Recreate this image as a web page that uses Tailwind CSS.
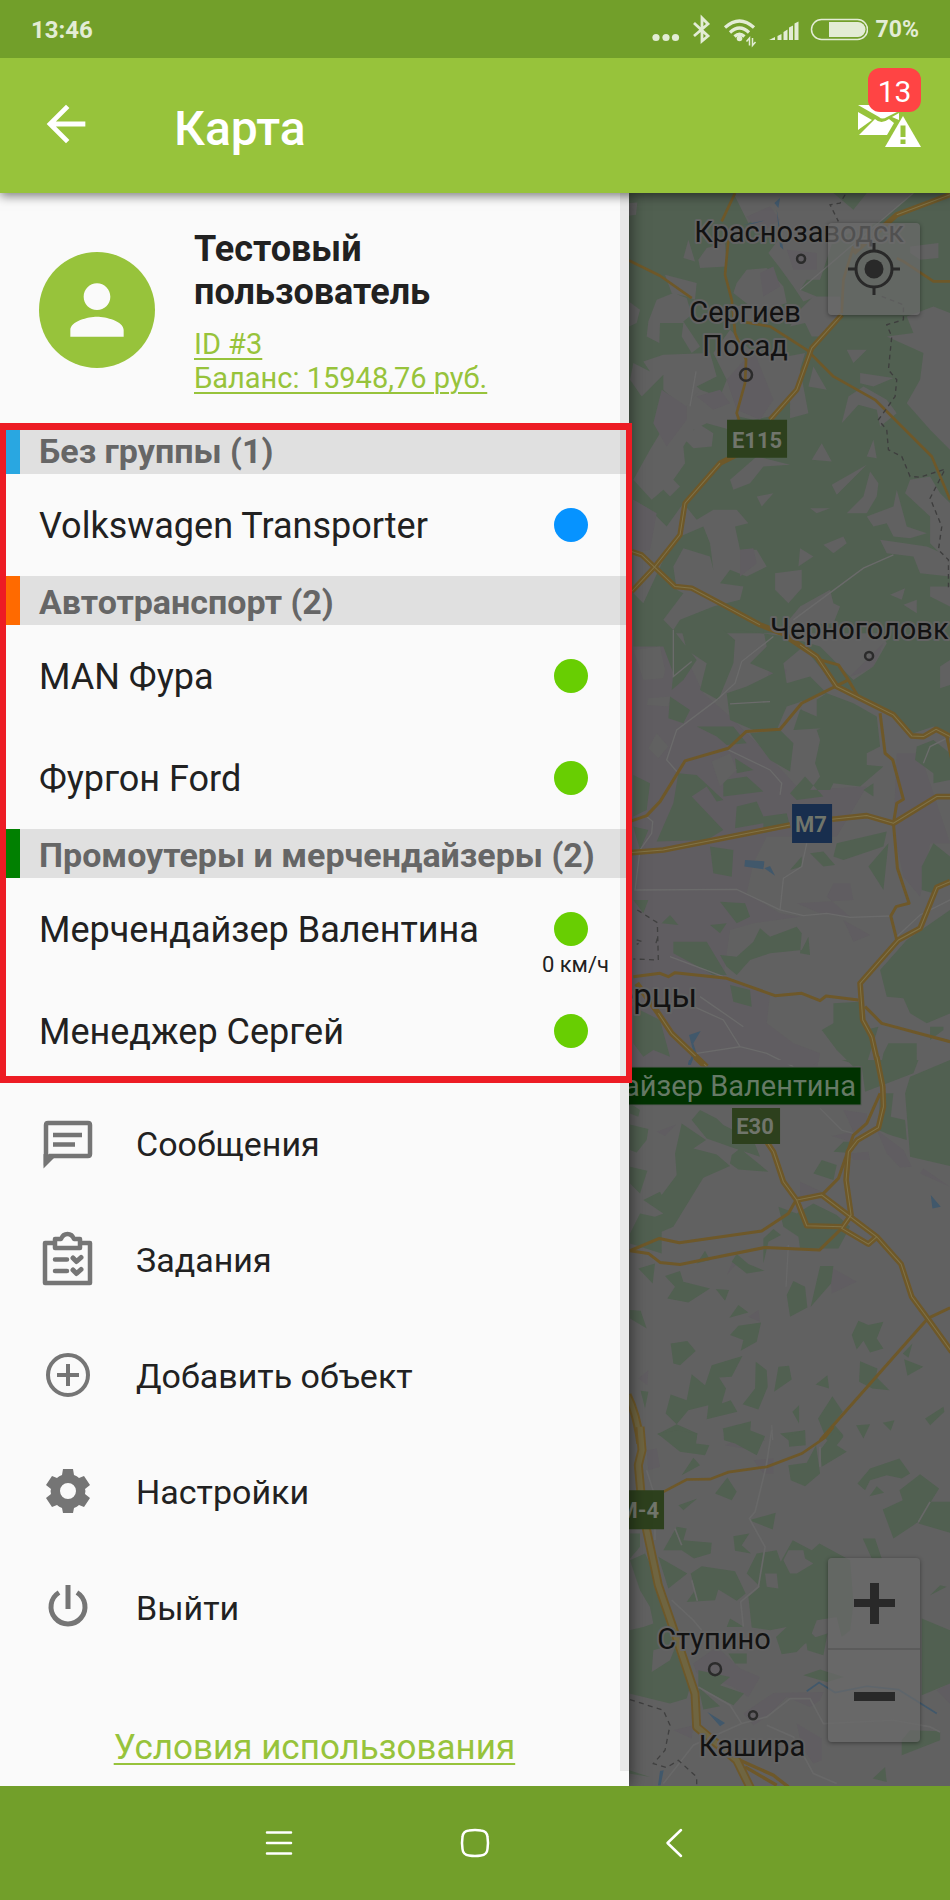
<!DOCTYPE html>
<html lang="ru">
<head>
<meta charset="utf-8">
<meta name="viewport" content="width=device-width, initial-scale=1">
<title>Карта</title>
<script src="https://cdn.jsdelivr.net/npm/@tailwindcss/browser@4"></script>
</head>
<body class="flex min-h-screen flex-col bg-[#fafafa] font-['Roboto','Noto_Sans',sans-serif] text-[#212121]">

<!-- Status bar -->
<div class="relative z-30 flex h-[58px] items-center justify-between bg-[#729f2a] pt-px pr-[31px] pl-[31px] text-[#e3ecd5]">
  <span class="text-[24px] leading-none font-bold">13:46</span>
  <div class="flex items-center">
    <svg class="h-[58px] w-[218px]" viewBox="650 0 218 58" fill="currentColor" aria-hidden="true">
      <circle cx="656" cy="36.500" r="3.600"/><circle cx="666" cy="36.500" r="3.600"/><circle cx="675.500" cy="36.500" r="3.600"/>
      <path d="M694 22l14 13-6 5V17l6 6-14 12" fill="none" stroke="currentColor" stroke-width="2.800"/>
      <g fill="none" stroke="currentColor" stroke-width="3.200"><path d="M725 26.500q14.500-13 29 0M730 31.500q9.500-9 19 0M734.500 35.500q5-4.500 10 0"/></g>
      <circle cx="739.500" cy="37.500" r="2.800"/>
      <path d="M749.500 44.500v-7.500l-3 3.500M752.500 37v7.500l3-3.500" fill="none" stroke="currentColor" stroke-width="1.500"/>
      <path d="M769 39l6-3v3zM777.500 35l4-2v6h-4zM783.500 31l4-2.500V39h-4zM789 26.500l4-2V39h-4zM794.500 22.500l4-2V39h-4z"/>
      <rect x="811.500" y="18.500" width="56" height="20" rx="10" fill="none" stroke="currentColor" stroke-width="1.500"/>
      <path d="M829 21h29a7.500 7.500 0 0 1 0 15h-29z"/>
    </svg>
    <span class="ml-2 text-[23px] leading-none font-bold">70%</span>
  </div>
</div>

<!-- App bar -->
<header class="relative z-20 flex h-[135px] items-center bg-[#97c33b] pr-[29px] pl-[37px] text-white shadow-[0_3px_10px_rgba(0,0,0,0.5)]">
  <button type="button" aria-label="Назад" class="mb-[3px] size-[58px]">
    <svg class="size-[58px]" viewBox="0 0 24 24" fill="currentColor"><path d="M20 11H7.830l5.590-5.590L12 4l-8 8 8 8 1.410-1.410L7.830 13H20v-2z"/></svg>
  </button>
  <h1 class="ml-[79px] pt-[6px] text-[48px] leading-[56px] font-medium">Карта</h1>
  <button type="button" aria-label="Уведомления: 13" class="relative mb-[35px] ml-auto h-[80px] w-[63px]">
    <svg class="h-[80px] w-[63px]" viewBox="858 68 63 80" fill="#fff">
      <path d="M858 105h42l-1 6-12 6q-5 3-8 0zM858 112l14 8-14 10zM875 119q6 6 14 0l5 4-7 12h-28zM899 113v7l-7-3z"/>
      <path d="M903 116l18 31h-36z"/>
      <path d="M900.500 125.500h5V137h-5zM900.500 139.500h5v4.500h-5z" fill="#97c33b"/>
    </svg>
    <span class="absolute top-0 right-0 flex h-11 w-[53px] items-center justify-center rounded-xl bg-[#ff4444] pt-[3px] text-[30px] leading-none">13</span>
  </button>
</header>

<div class="flex flex-1">
  <!-- Drawer -->
  <aside class="relative z-10 flex w-[66.2%] flex-col bg-[#fafafa] shadow-[0_0_16px_rgba(0,0,0,0.6)]">
    <div class="flex items-start gap-[39px] px-[39px] pt-[35px] pb-[30px]">
      <div class="mt-6 flex size-[116px] shrink-0 items-center justify-center rounded-full bg-[#97c33b]">
        <svg class="size-[80px]" viewBox="0 0 24 24" fill="#fafafa" aria-hidden="true"><path d="M12 12c2.210 0 4-1.790 4-4s-1.790-4-4-4-4 1.790-4 4 1.790 4 4 4zm0 2c-2.670 0-8 1.340-8 4v2h16v-2c0-2.660-5.330-4-8-4z"/></svg>
      </div>
      <div>
        <h2 class="text-[36px] leading-[43px] font-bold">Тестовый<br>пользователь</h2>
        <div class="mt-[13px] flex flex-col items-start text-[29px] leading-[34px] text-[#97c33b]">
          <a href="#id" class="underline decoration-2 underline-offset-4">ID #3</a>
          <a href="#balance" class="underline decoration-2 underline-offset-4">Баланс: 15948,76 руб.</a>
        </div>
      </div>
    </div>

    <!-- Tracked objects by group -->
    <section class="relative" aria-label="Объекты">
      <h3 class="flex h-[49px] items-center border-l-[20px] border-[#29a7e1] bg-[#e0e0e0] pt-[3px] pl-[19px] text-[34px] leading-none font-bold text-[#666]">Без группы (1)</h3>
      <ul>
        <li class="flex h-[102px] items-center justify-between pr-[41px] pl-[39px] text-[36px] leading-none"><span class="pt-[2px]">Volkswagen Transporter</span><span class="size-[34px] rounded-full bg-[#0693ff]"></span></li>
      </ul>
      <h3 class="flex h-[49px] items-center border-l-[20px] border-[#ff6a00] bg-[#e0e0e0] pt-[3px] pl-[19px] text-[34px] leading-none font-bold text-[#666]">Автотранспорт (2)</h3>
      <ul>
        <li class="flex h-[102px] items-center justify-between pr-[41px] pl-[39px] text-[36px] leading-none"><span class="pt-[2px]">MAN Фура</span><span class="size-[34px] rounded-full bg-[#68ce02]"></span></li>
        <li class="flex h-[102px] items-center justify-between pr-[41px] pl-[39px] text-[36px] leading-none"><span class="pt-[2px]">Фургон Ford</span><span class="size-[34px] rounded-full bg-[#68ce02]"></span></li>
      </ul>
      <h3 class="flex h-[49px] items-center border-l-[20px] border-[#018001] bg-[#e0e0e0] pt-[3px] pl-[19px] text-[34px] leading-none font-bold whitespace-nowrap text-[#666]">Промоутеры и мерчендайзеры (2)</h3>
      <ul>
        <li class="flex h-[102px] items-center justify-between pr-[41px] pl-[39px] text-[36px] leading-none"><span class="pt-[2px]">Мерчендайзер Валентина</span><span class="relative size-[34px] rounded-full bg-[#68ce02]"><span class="absolute top-[42px] -left-3 text-[22px] leading-none whitespace-nowrap">0 км/ч</span></span></li>
        <li class="flex h-[102px] items-center justify-between pr-[41px] pl-[39px] text-[36px] leading-none"><span class="pt-[2px]">Менеджер Сергей</span><span class="size-[34px] rounded-full bg-[#68ce02]"></span></li>
      </ul>
      <div class="pointer-events-none absolute -top-[2px] -right-[3px] -bottom-px left-0 z-10 border-x-[6px] border-y-[7px] border-[#ed1c24]"></div>
    </section>

    <nav class="mt-1 flex flex-col text-[34px] leading-none" aria-label="Меню">
      <a href="#messages" class="flex h-[116px] items-center gap-10 pl-[38px]">
        <svg class="size-[58px] shrink-0" viewBox="38 1113 58 58" fill="none" stroke="#757575" aria-hidden="true"><path d="M46 1158v-35q0-2 2-2h40q2 0 2 2v29q0 2-2 2H50z" stroke-width="4.500"/><path d="M43.500 1152v14.500l11-11z" fill="#757575" stroke="none"/><path d="M53 1133h29M53 1142.500h22" stroke-width="4.500"/></svg>
        <span>Сообщения</span></a>
      <a href="#tasks" class="flex h-[116px] items-center gap-10 pl-[38px]">
        <svg class="size-[58px] shrink-0" viewBox="38 1228 58 58" fill="none" stroke="#757575" stroke-width="4.500" stroke-linejoin="round" stroke-linecap="round" aria-hidden="true"><path d="M54 1240h-9v40h45v-40h-9"/><path d="M55 1236h6q2-5 6.500-5t6.500 5h6v9H55z"/><path d="M55 1256.500h12M55 1268h12"/><path d="M73 1255l3.500 3.500 4.500-4M73 1267l3.500 3.500 4.500-4" stroke-width="5"/></svg>
        <span>Задания</span></a>
      <a href="#add" class="flex h-[116px] items-center gap-10 pl-[38px]">
        <svg class="size-[58px] shrink-0" viewBox="0 0 58 58" fill="none" stroke="#757575" stroke-width="4" aria-hidden="true"><circle cx="30" cy="28" r="20"/><path d="M30 17v22M19 28h22"/></svg>
        <span>Добавить объект</span></a>
      <a href="#settings" class="flex h-[116px] items-center gap-10 pl-[38px]">
        <svg class="size-[58px] shrink-0" viewBox="0 0 58 58" fill="#757575" aria-hidden="true"><path fill-rule="evenodd" d="M25 6h10l1 6q3 1 5 3l5-2 6 9-5 4q1 2 0 5l5 4-6 9-5-2q-2 2-5 3l-1 5H25l-1-5q-3-1-5-3l-5 2-6-9 5-4q-1-3 0-5l-5-4 6-9 5 2q2-2 5-3zM30 20a8 8 0 1 0 0 16 8 8 0 0 0 0-16z"/></svg>
        <span>Настройки</span></a>
      <a href="#logout" class="flex h-[116px] items-center gap-10 pl-[38px]">
        <svg class="size-[58px] shrink-0" viewBox="0 0 58 58" fill="none" stroke="#757575" stroke-width="5" aria-hidden="true"><path d="M21 13.500a17 17 0 1 0 18 0M30 6v24"/></svg>
        <span>Выйти</span></a>
    </nav>

    <div class="mt-auto flex justify-center pt-12 pb-4">
      <a href="#terms" class="text-[35px] leading-[44px] text-[#97c33b] underline decoration-2 underline-offset-4">Условия использования</a>
    </div>
    <div class="pointer-events-none absolute top-0 right-0 bottom-[15px] w-[9px] bg-black/7"></div>
  </aside>

  <!-- Map, dimmed while the drawer is open -->
  <main class="relative flex-1 overflow-hidden bg-[#616161]">
    <svg class="absolute inset-0 size-full" viewBox="0 0 321 1593" preserveAspectRatio="xMidYMid slice" role="img" aria-label="Карта">
      <!-- North -->
      <g transform="translate(-9 -3) scale(0.333333)">
        <path fill="#516051" d="M0 0H1000V1330H0z"/>
        <g fill="#616161">
          <path d="M340 10L480 10 450 60 385 100 370 70zM480 10L640 10 700 60 740 10 880 10 780 95 640 150 600 270 560 270 540 300 590 320 550 335 520 290 480 235 445 190 475 150 390 105 440 50zM190 205L205 150 225 215zM235 210L260 175 315 160 320 230 240 235zM870 170L955 160 955 205 900 210 870 190zM27 40L52 38 48 75 27 78z"/>
          <path d="M135 255L230 280 225 330 200 320 155 310zM110 330L160 310 200 325 215 375 190 395 240 470 215 490 185 440 190 400 120 400 118 460 80 440 85 395zM27 335L60 360 50 400 27 410zM70 515L130 495 270 490 290 560 230 590 290 640 230 650 190 655 130 600 130 555 65 620 30 570 40 520 90 545zM350 280L380 240 440 235 490 290 500 340 440 360 420 390 360 400 345 350 385 345 340 310zM510 410L540 360 580 320 660 320 665 370 600 440 575 440 555 400z"/>
          <path d="M280 490L330 420 400 490 500 500 555 490 540 540 550 590 565 670 510 685 510 620 450 680 400 690 355 680 330 720 260 700 220 720 190 770 195 820 160 870 180 890 150 920 130 900 95 930 40 870 90 780 120 730 130 660 190 660 240 600 300 620 320 570zM565 590L580 530 620 600zM190 745L240 705 280 730 275 770 220 775zM680 480L740 480 700 520zM720 550L820 565 760 590 720 580zM665 700L685 620 730 590 800 630 830 670 780 710 770 660 715 645zM860 380L940 350 990 370 990 780 930 720 860 640 900 570 910 490 800 440 880 430zM575 810L605 760 635 815zM740 800L760 750 770 805zM410 800L510 825 430 830 390 880 340 900 330 870zM635 885L740 825 650 915zM680 970L730 920 750 845 775 880 770 920 740 970zM870 870L930 860 960 910 990 940 990 1110 960 1090 930 1060 930 980 855 910zM410 920L460 910 425 950zM570 955L630 955 590 970zM740 980L820 950 830 900 860 1010 920 1030 870 1045 820 1040 800 1000 760 1010z"/>
          <path d="M280 960L350 960 385 1000 345 1010 360 1080 410 1080 440 1130 380 1160 330 1140 300 1180 370 1190 360 1230 280 1250 180 1290 160 1320 130 1290 190 1210 170 1200 160 1130 190 1075 270 1100 280 1140 270 1060 250 1010 180 1040 130 1110 70 1240 40 1210 40 930 90 960 140 1010 190 940 230 990zM610 1065L670 1040 680 1060 640 1090zM540 1075L580 1100 535 1130zM465 1150L545 1140 545 1195 505 1240 465 1200zM780 1050L920 1070 990 1100 990 1160 900 1150 880 1100 800 1090zM540 1250L630 1200 640 1240 660 1250 640 1300 490 1310zM810 1215L855 1195 845 1230zM930 1190L990 1190 990 1250 930 1220zM850 1245L890 1230 890 1270z"/>
        </g>
        <path fill="#605d61" d="M380 80L450 50 480 90 420 130zM420 250L460 230 480 290 430 320zM320 570L400 480 460 630 420 690 350 660zM230 620L300 600 330 640 280 660zM100 700L125 600 200 650 200 690 140 770zM500 180L590 190 590 240 520 240zM40 930L110 970 90 1080 40 1090zM360 1080L400 1075 410 1120 360 1160z"/>
        <g fill="none" stroke="#6a6a6a" stroke-width="4"><path d="M540 300L880 10M210 650L228 545M520 1290L730 1135 820 1095"/></g>
        <path fill="#41586b" d="M463 40L480 25 475 55zM370 105L435 92 400 102zM470 60L490 180 480 170z"/>
        <g fill="none" stroke="#6e5829" stroke-width="8" stroke-linejoin="round"><path d="M345 10L305 95M325 150L315 255 335 330 345 430 378 510 375 580 350 670 360 700M27 212L120 258 215 325M360 395L450 410 560 480 640 560 765 630 935 800 990 930M700 170L670 270 665 370M830 205L850 215 940 275 990 275"/></g>
        <g fill="none" stroke="#6e5829" stroke-width="16" stroke-linejoin="round"><path d="M990 15L830 75 700 190M665 375L575 475 530 600 450 690M360 790L300 820 195 940 180 1035 105 1130 35 1205M35 1085L65 1095 165 1190 215 1195 300 1240 420 1305 510 1340"/></g>
        <g fill="none" stroke="#807347" stroke-width="3"><path d="M990 15L830 75M665 375L575 475 530 600 450 690M300 820L195 940 180 1035 105 1130 35 1205M35 1085L65 1095 165 1190 215 1195 420 1305"/></g>
        <path fill="none" stroke="#3e3e3e" stroke-width="4" stroke-dasharray="14 12" d="M675 15L660 40 630 45 655 95M785 320L850 345 850 390 800 405 815 440 805 540 830 570 825 620 775 690 800 720 805 780 845 800 870 860 900 862 975 838 930 925 965 1010 955 1080 985 1110 985 1200"/>
      </g>
      <!-- East -->
      <g transform="translate(-9 437) scale(0.333333)">
        <path fill="#605d61" d="M0 0H160L250 190 330 260 420 350 540 480 740 470 650 620 440 620 400 700 380 790 480 850 540 860 400 880 330 900 310 1040 450 1090 440 1180 520 1240 600 1270 590 1320 0 1320z"/>
        <path fill="#605d61" d="M450 110L500 120 480 200 440 160zM690 140L790 40 760 110 720 130zM830 370L900 370 930 460 990 640 930 640 900 800 850 740 820 600zM530 820L700 810 690 760 640 760 620 800 690 860 600 850zM670 870L750 915 700 935z"/>
        <g fill="#516051">
          <path d="M40 0H160L230 90 190 150 155 180 160 130 130 50 40 50zM185 0H310L345 30 340 100 295 210 240 180 260 100 200 60zM350 0L430 0 440 50 390 100 460 130 380 170 320 190 330 270 400 300 470 300 500 230 620 190 570 140 500 160 490 100 550 50 590 100 650 170 720 200 800 250 830 270 880 310 940 290 990 310V0H780L800 40 760 110 700 150 650 100 600 50 500 20zM150 200L210 240 190 280 145 265zM230 290L340 290 380 340 320 345 290 320zM390 310L480 300 520 340 510 425 450 390zM520 300L690 290 670 270 590 300 600 330 585 400 600 440 570 480 630 480 640 460 720 470 790 410 740 405 740 370 780 350 770 260 700 220 620 190 540 240zM345 385L400 420 350 430zM510 490L555 440 610 500 530 510zM40 435L90 460 80 540 40 560zM175 430L230 435 310 510 290 515 260 470 215 500 310 600 260 630 110 635 160 520zM310 450L380 440 430 485 310 500zM350 530L410 515 430 560 500 550 510 590 430 610 430 580 345 595zM40 590L85 600 60 660zM270 650L340 660 335 740 280 730zM510 720L545 680 545 710zM570 670L610 665 645 705 610 710zM650 640L800 605 790 650 670 690 640 680zM730 480L760 460 760 500zM745 710L805 640 790 780zM890 350L940 330 990 370 990 450 940 460 940 430 885 390zM905 710L940 640 990 680 990 750 940 790 905 780zM300 815L375 820 390 860 350 880zM40 810L85 810 70 850zM125 880L150 855 175 885zM270 885L320 880 300 910zM160 935L260 935 320 1035 280 1035 160 970zM300 975L350 980 400 935 420 895 450 920 530 890 545 910 540 970 570 975 565 920 545 960 450 970 390 990 350 1035 320 1010zM330 1065L390 1080 395 1130 340 1115zM40 1130L120 1170 150 1280 100 1260 70 1280 40 1240zM990 840L860 930 780 1020 800 1100 850 1105 870 1150 920 1180 990 1150zM640 1120L720 1115 735 1200 775 1190 740 1300 700 1310 650 1260 605 1200 640 1180zM805 1240L890 1240 890 1290 870 1320 780 1320 790 1270zM930 1190L970 1190 970 1200 930 1230z"/>
        </g>
        <path fill="#616161" d="M960 110L990 90 990 165 960 175zM40 60L120 50 135 120 130 145 70 150zM85 205L150 200 145 230 80 225zM110 310L145 350 115 385 85 355zM275 395L330 370 350 420 300 470zM540 215L590 205 590 260 545 240z"/>
        <path fill="#41586b" d="M375 690L433 694 430 718 373 710zM433 715L450 708 465 737zM207 1215L242 1203 220 1240 228 1265 212 1305H204L220 1265z"/>
        <g fill="none" stroke="#6b6b6b" stroke-width="4"><path d="M460 20L365 95 345 160 290 210 170 300 140 390 175 430M160 0V140L215 95M330 222L450 215M325 360L450 420 485 460 480 495M80 560L98 575 95 610 60 660 45 780 350 778 480 840 550 857 620 850 690 862 810 858M480 840L490 745 545 710 560 640M990 810L900 855 830 920M910 400L930 350 990 320M240 1100L370 1190M150 980L310 1040M200 1120L310 1170 360 1250 230 1270M360 1250L440 1270 520 1310"/></g>
        <g fill="none" stroke="#6e5829" stroke-width="9" stroke-linejoin="round"><path d="M35 573L80 557 120 515 195 393 325 355 378 305 480 298 545 220 685 150 655 105 600 90M685 150L720 210M780 250L795 370 818 390 850 508 830 520 820 580 832 715 867 820 828 830 812 858 830 930M40 1040L120 1030 145 1040 165 1028 320 1045 465 1097 545 1090 600 1112 618 1098 715 1110M735 1130L785 1180 990 1235M980 320L995 390"/></g>
        <g fill="none" stroke="#6e5829" stroke-width="17" stroke-linejoin="round"><path d="M500 20L590 80 650 170 820 255 875 318 910 320 948 298 990 320M35 668L130 660 510 585M636 568L740 557 820 580 950 500 990 500M990 755L950 772 900 895 835 930 720 1060 728 1170 755 1220 780 1330M50 1060L115 1150 155 1210 260 1310"/></g>
        <g fill="none" stroke="#807347" stroke-width="3"><path d="M540 45L590 80 650 170 820 255 875 318 910 320 948 298 990 320M35 668L130 660 510 585M636 568L740 557 820 580 950 500 990 500M990 755L950 772 900 895 835 930 720 1060 728 1170 755 1220 780 1330M115 1150L155 1210 260 1310"/></g>
        <path fill="none" stroke="#404040" stroke-width="4" stroke-dasharray="15 13" d="M52 840L112 878 115 990 40 987M50 930L66 935 50 943M112 925L105 950"/>
      </g>
      <!-- South-east -->
      <g transform="translate(-9 867) scale(0.333333)">
        <g fill="#605d61"><path d="M330 0H600L580 14H330zM670 150L740 160 740 190 700 215zM770 210L850 270 875 320 840 322 800 280zM690 280L745 275 750 300 700 300zM635 228L700 215 690 245zM540 365L605 395 540 410zM630 620L710 665 635 700zM110 215L168 193 135 228zM320 645L340 600 350 610zM900 340L990 380 910 325zM385 770L415 750 420 785zM55 955L85 930 82 975z"/></g>
        <g fill="#516051"><path d="M665 0H895L880 40 735 95 725 20zM780 100H820L812 170 855 180 860 240 810 225 775 210zM990 0L870 50 855 100 870 290 990 318zM30 130L60 150 55 170 30 160zM30 193L85 207 80 240 50 277 30 270zM215 180L240 150 290 175 310 195 400 240 420 290 345 265 260 235zM335 285L360 265 445 335 355 328 330 310zM185 190L258 240 220 265 290 283 330 318 250 353 160 500 125 515 125 580 30 550 30 520 60 460 105 470 130 460 70 420 120 395 125 405 170 345 165 280zM30 320L82 332 60 400 30 370zM580 340L605 300 650 315 640 360zM640 275L670 245 690 245 680 278zM475 440L530 460 580 430 650 465 690 500 655 565H540L535 530 490 500zM430 535L460 507 483 525 445 545 430 610zM350 582L385 612 433 632 380 640 335 605zM230 610L255 572 270 600zM55 625L105 610 98 670zM135 648L180 633 190 665 270 685 205 727 142 715 165 680zM287 687L327 690 315 722zM600 618H640L633 670 572 740zM500 705L520 663 555 680 562 742 510 770zM30 750L62 752 80 805 30 775zM328 773L355 735 385 757zM330 825L355 797 423 787 410 845 362 872 370 840zM152 850L202 843 227 873 180 915 160 910zM695 825L715 782 745 795 790 785 770 835 790 865 750 877 730 842 710 868zM275 915L367 888 335 950 297 952 318 985 305 1030 332 1020 352 1055 260 1077 265 1035 205 1050 170 1092 232 1120 228 1140H150L112 1122 170 1092 137 1060 152 1003 200 1020 215 942 255 975zM407 905L440 930 443 980 415 1048 368 1032 405 985zM475 920L507 917 515 958 462 995zM587 973L622 945 627 985zM720 903L772 925 768 950 808 990 757 985 717 965zM852 897L910 920 862 947zM848 880L877 850 865 893zM62 992L85 995 75 1045zM637 1008L668 1055 640 1090 670 1125 655 1140H620L594 1075zM517 1055L537 1035 537 1090zM915 1075L970 1040 973 1055 930 1095zM788 1088L823 1080 812 1112zM708 1095L750 1092 730 1135zM308 1105L393 1083 390 1120 435 1140H320zM480 1120L555 1110V1140H505z"/></g>
        <path fill="#41586b" d="M932 405L962 440 937 445zM207 0H217L212 12H204z"/>
        <path d="M505 555L498 680M600 145L665 210 700 220M455 1095L458 1140" fill="none" stroke="#686868" stroke-width="4"/>
        <g fill="none" stroke="#6e5829" stroke-width="9" stroke-linejoin="round"><path d="M30 572L118 535 178 548 425 513 505 460 528 420M30 572L85 580 120 607 180 613 435 562 598 570 665 505M605 405L655 355 700 225 740 190 780 100M990 743L923 775 600 1140"/></g>
        <g fill="none" stroke="#6e5829" stroke-width="17" stroke-linejoin="round"><path d="M770 -10L788 80 790 140 775 203 712 240 685 275 678 360 693 465 665 505 745 552 770 530 605 405 530 420 560 497 665 500M440 245L460 275 490 365 530 420M770 530L843 612 875 710 923 775 995 875M225 -10L250 14"/></g>
        <g fill="none" stroke="#807347" stroke-width="3"><path d="M770 -10L788 80 790 140 775 203 712 240 685 275 678 360 693 465 665 505 745 552 770 530 605 405 530 420 560 497 665 500M440 245L460 275 490 365 530 420M770 530L843 612 875 710 923 775 995 875"/></g>
        <path d="M22 1005Q50 1060 62 1150" fill="none" stroke="#6e5829" stroke-width="26"/><path d="M22 1005Q50 1060 62 1150" fill="none" stroke="#6f6541" stroke-width="14"/>
      </g>
      <!-- South -->
      <g transform="translate(-9 1237) scale(0.333333)">
        <g fill="#605d61"><path d="M80 60L110 55 120 110 85 120zM315 45L370 20 370 55zM400 90L460 85 460 130 430 130zM220 700L290 650 360 715 420 740 385 800 340 770 230 730zM370 850L460 788 610 785 600 810 570 830 500 800 440 860 400 885zM530 880L605 925 605 990 580 1000 545 950zM160 900L220 885 215 925zM950 780L990 760V820z"/></g>
        <g fill="#516051"><path d="M112 10L170 0 232 10 228 40 268 45 255 75 180 65zM310 0H390L435 18 410 75 345 40 312 30zM505 15L555 0 557 45 507 50zM600 60L645 0 670 20 650 45 680 65 605 110zM505 105L560 98 588 45 600 130 555 168 512 150zM185 135L220 83 240 105zM285 190L322 142 350 185 335 210zM175 225L232 205 190 240zM712 160L750 115 838 85 870 130 845 145 800 135 750 150 735 180zM748 198L770 168 792 188zM838 180L900 132 957 175 895 275 820 325 788 238 848 210zM930 215H990V308L895 280zM388 270L467 248 458 298zM130 360L170 290 200 295 190 330 275 338 272 370 222 385 185 360zM340 318L388 310 365 345 393 370 345 362zM30 310L60 310 60 350 30 385zM380 430L410 370 470 360 482 395 518 330 575 360 598 340 690 390 700 520 690 600 665 620 650 560 590 570 575 610 600 635 555 640 530 665 485 672 468 620 500 590 450 600 395 592 385 500 420 470zM115 380L202 430 145 475zM212 430L245 408 345 423 377 490 350 512 295 478 285 510 200 515 225 480zM510 480L545 470 590 515 585 545 510 555zM728 325H765L785 385H755zM930 495L960 465 980 470zM30 390L75 370 130 480 140 580 160 640 190 720 210 770 200 805 150 820 28 790V600L70 590 100 580 90 530 60 480zM235 720L330 740 300 765 372 790 340 825 235 770zM235 770L300 828 250 838zM320 590L330 565 372 590zM325 670L380 670 380 700 345 700zM558 630L622 610 610 675 562 660zM550 735L600 718 670 740 620 755zM905 565L990 600V760L905 795zM870 900L960 903 960 930 845 975 845 930zM758 1045L795 1010 800 1055zM28 1020L90 1040 28 1030z"/></g>
        <path fill="#616161" d="M435 430L470 430 475 475 440 470zM505 360L550 360 555 385 580 400 530 430 510 430 490 390zM100 660L170 640 150 690 95 725z"/>
        <path fill="#41586b" d="M262 845L315 878 300 888zM120 1022L131 1020 122 1065H114z"/>
        <path d="M560 783L597 757 645 787 740 768 835 778 950 850" fill="none" stroke="#41586b" stroke-width="5"/>
        <g fill="none" stroke="#686868" stroke-width="5"><path d="M455 0L438 110 405 245 388 265 435 350 415 470 362 515 370 590M80 120L105 200 105 330M165 295L185 345M215 450L232 512M155 510L220 570 245 600M235 770L330 825 365 880 440 860 510 805 570 805 610 880 820 870 930 890 960 905M365 880L220 945 130 1060M440 885L520 920 580 1030 650 1060M600 50V110M930 215L895 275"/></g>
        <path d="M130 185L200 148 270 147 325 126 440 110 545 70 615 22 640 -10" fill="none" stroke="#6e5829" stroke-width="8"/>
        <path d="M360 990L460 1035 505 1070M375 1010L470 1065" fill="none" stroke="#6e5829" stroke-width="10"/>
        <path d="M60 -10L66 60 55 105 62 180 80 300 115 465 165 610 225 790 230 890 350 990 392 1075" fill="none" stroke="#6e5829" stroke-width="27" stroke-linejoin="round"/>
        <path d="M60 -10L66 60 55 105 62 180 80 300 115 465 165 610 225 790 230 890 350 990 392 1075" fill="none" stroke="#6f6541" stroke-width="16" stroke-linejoin="round"/>
        <path fill="none" stroke="#404040" stroke-width="4" stroke-dasharray="15 13" d="M30 808L130 840 150 885 135 960 100 1000 140 1012 175 990 230 1040V1065"/>
      </g>
      <!-- Towns -->
      <g fill="none" stroke="#2b2b2b" stroke-width="2.500">
        <circle cx="172" cy="66" r="4"/><circle cx="117" cy="182" r="6"/><circle cx="240" cy="463" r="4"/><circle cx="86" cy="1476" r="6"/><circle cx="124" cy="1522" r="4"/>
      </g>
      <g fill="#121212" stroke="#646464" stroke-width="4" stroke-linejoin="round" paint-order="stroke" text-anchor="middle" font-family="Roboto, sans-serif" font-size="29">
        <text x="170" y="49">Краснозаводск</text>
        <text x="116" y="129">Сергиев</text>
        <text x="116" y="163">Посад</text>
        <text x="141" y="446" text-anchor="start">Черноголовк</text>
        <text x="68" y="814" text-anchor="end" font-size="33">Люберцы</text>
        <text x="85" y="1456">Ступино</text>
        <text x="123" y="1563">Кашира</text>
      </g>
      <!-- Road shields and the object label -->
      <path d="M98 227h60v38H98zM103 915h48v36h-48zM-20 1297h55v39h-55z" fill="#2d401d"/>
      <path d="M163 611h40v39h-40z" fill="#182e4e"/>
      <path d="M-80 874H232v38H-80z" fill="#003200" stroke="#595b59"/>
      <g fill="#70756b" font-family="Roboto, sans-serif" font-weight="700" font-size="22" text-anchor="middle">
        <text x="128" y="255">E115</text><text x="126" y="941">E30</text><text x="182" y="639">M7</text><text x="30" y="1325" text-anchor="end">М-4</text>
      </g>
      <text x="227" y="903" text-anchor="end" fill="#667a66" font-family="Roboto, sans-serif" font-size="29">Мерчендайзер Валентина</text>
    </svg>

    <button type="button" aria-label="Моё местоположение" class="absolute top-[30px] right-[30px] flex size-[92px] items-center justify-center rounded bg-[#6b6b6b]/70 shadow-[0_1px_4px_rgba(0,0,0,0.4)]">
      <svg class="size-[54px]" viewBox="0 0 54 54" fill="none" stroke="#292929" stroke-width="3" aria-hidden="true"><circle cx="27" cy="27" r="18"/><circle cx="27" cy="27" r="9.500" fill="#292929" stroke="none"/><path d="M27 1v8M27 45v8M1 27h8M45 27h8"/></svg>
    </button>
    <div class="absolute right-[30px] bottom-11 flex w-[92px] flex-col divide-y-2 divide-[#5b5b5b] rounded bg-[#6b6b6b]/70 shadow-[0_1px_4px_rgba(0,0,0,0.4)]">
      <button type="button" aria-label="Приблизить" class="flex h-[92px] items-center justify-center"><svg class="size-[41px]" viewBox="0 0 41 41" fill="#292929"><path d="M16 0h9v16h16v8H25v17h-9V24H0v-8h16z"/></svg></button>
      <button type="button" aria-label="Отдалить" class="flex h-[92px] items-center justify-center"><svg class="size-[41px]" viewBox="0 0 41 41" fill="#292929"><path d="M0 16h41v9H0z"/></svg></button>
    </div>
  </main>
</div>

<!-- System navigation -->
<footer class="relative z-20 flex h-[114px] items-center justify-center gap-[167px] bg-[#729f2a]">
  <button type="button" aria-label="Недавние" class="size-[30px]"><svg class="size-[30px]" viewBox="0 0 30 30" fill="none" stroke="#fff" stroke-width="2.500" stroke-linecap="round"><path d="M4 4.500h24M4 15h24M4 25.500h24"/></svg></button>
  <button type="button" aria-label="Домой" class="size-[30px]"><svg class="size-[30px]" viewBox="0 0 30 30" fill="none" stroke="#fff" stroke-width="2.500"><path d="M9 2.500Q15 1.500 21 2.500 27 3 27.500 9 28.500 15 27.500 21 27 27 21 27.500 15 28.500 9 27.500 3 27 2.500 21 1.500 15 2.500 9 3 3 9 2.500z"/></svg></button>
  <button type="button" aria-label="Назад" class="size-[30px]"><svg class="size-[30px]" viewBox="0 0 30 30" fill="none" stroke="#fff" stroke-width="2.500" stroke-linecap="round" stroke-linejoin="round"><path d="M24 2L10.500 15 24 28"/></svg></button>
</footer>
</body>
</html>
